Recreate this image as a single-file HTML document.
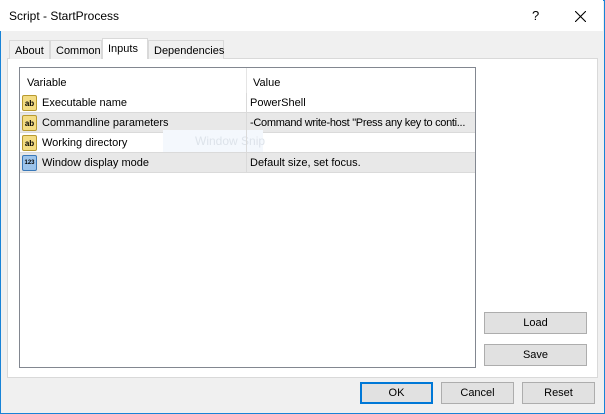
<!DOCTYPE html>
<html><head><style>
*{margin:0;padding:0;box-sizing:border-box}
body{width:605px;height:414px;overflow:hidden;font-family:"Liberation Sans",sans-serif;font-size:11px;color:#000;background:#f0f0f0;position:relative;white-space:nowrap}
.win{position:absolute;left:0;top:0;width:605px;height:414px;border:1px solid #1883d7}
.title{position:absolute;left:0;top:0;width:603px;height:31px;background:#fff}
.abs{position:absolute}
.tab{position:absolute;top:40px;height:19px;border:1px solid #d9d9d9;border-bottom:none;background:#f0f0f0;padding:4px 0 0 5px;font-size:11px}
.panel{position:absolute;left:7px;top:58px;width:591px;height:320px;background:#fff;border:1px solid #d9d9d9}
.list{position:absolute;left:19px;top:67px;width:457px;height:301px;border:1px solid #828790;background:#fff}
.row{position:absolute;left:0;width:455px;height:20px;border-bottom:1px solid #dadada}
.row span{position:absolute;top:4px}
.ic{position:absolute;left:2px;top:2px;width:15px;height:16px;border-radius:2px;font-size:8px;line-height:15px;text-align:center;font-weight:bold}
.btn{position:absolute;height:22px;border:1px solid #adadad;background:#e1e1e1;text-align:center;line-height:20px;font-size:11px}
</style></head><body>
<div class="win"></div>
<div class="title"></div>
<div class="abs" style="left:9px;top:9px;font-size:12px">Script - StartProcess</div>
<div class="abs" style="left:532px;top:8px;font-size:13px">?</div>
<svg class="abs" style="left:575px;top:11px" width="11" height="11"><path d="M0 0L11 11M11 0L0 11" stroke="#000" stroke-width="1.1"/></svg>
<div class="panel"></div>
<div class="tab" style="left:9px;width:41px">About</div>
<div class="tab" style="left:50px;width:52px">Common</div>
<div class="tab" style="left:102px;top:38px;height:21px;width:46px;background:#fff;border-color:#d9d9d9">Inputs</div>
<div class="tab" style="left:148px;width:76px">Dependencies</div>
<div class="list">
<div class="abs" style="left:226px;top:0;width:1px;height:105px;background:#e5e5e5"></div>
<div class="abs" style="left:7px;top:9px">Variable</div>
<div class="abs" style="left:233px;top:9px">Value</div>
<div class="row" style="top:25px;background:#fff"><div class="ic" style="background:#f3dc83;border:1px solid #b89a30">ab</div><span style="left:22px">Executable name</span><span style="left:230px">PowerShell</span></div>
<div class="row" style="top:45px;background:#e8e8e8"><div class="ic" style="background:#f3dc83;border:1px solid #b89a30">ab</div><span style="left:22px">Commandline parameters</span><span style="left:230px;letter-spacing:-0.3px">-Command write-host "Press any key to conti...</span></div>
<div class="row" style="top:65px;background:#fff"><div class="ic" style="background:#f3dc83;border:1px solid #b89a30">ab</div><span style="left:22px">Working directory</span><div class="abs" style="left:143px;top:-3px;width:100px;height:22px;background:#f4f8fd"></div><span style="left:175px;top:1px;color:#dde3ea;font-size:12px">Window Snip</span></div>
<div class="row" style="top:85px;background:#e8e8e8"><div class="ic" style="background:#9cc3ea;border:1px solid #3a78b8;font-size:6px">123</div><span style="left:22px">Window display mode</span><span style="left:230px">Default size, set focus.</span></div>
<div class="abs" style="left:226px;top:25px;width:1px;height:80px;background:#dadada"></div>
</div>
<div class="btn" style="left:484px;top:312px;width:103px">Load</div>
<div class="btn" style="left:484px;top:344px;width:103px">Save</div>
<div class="btn" style="left:360px;top:382px;width:73px;border:2px solid #0078d7;line-height:18px">OK</div>
<div class="btn" style="left:441px;top:382px;width:73px">Cancel</div>
<div class="btn" style="left:522px;top:382px;width:73px">Reset</div>
</body></html>
